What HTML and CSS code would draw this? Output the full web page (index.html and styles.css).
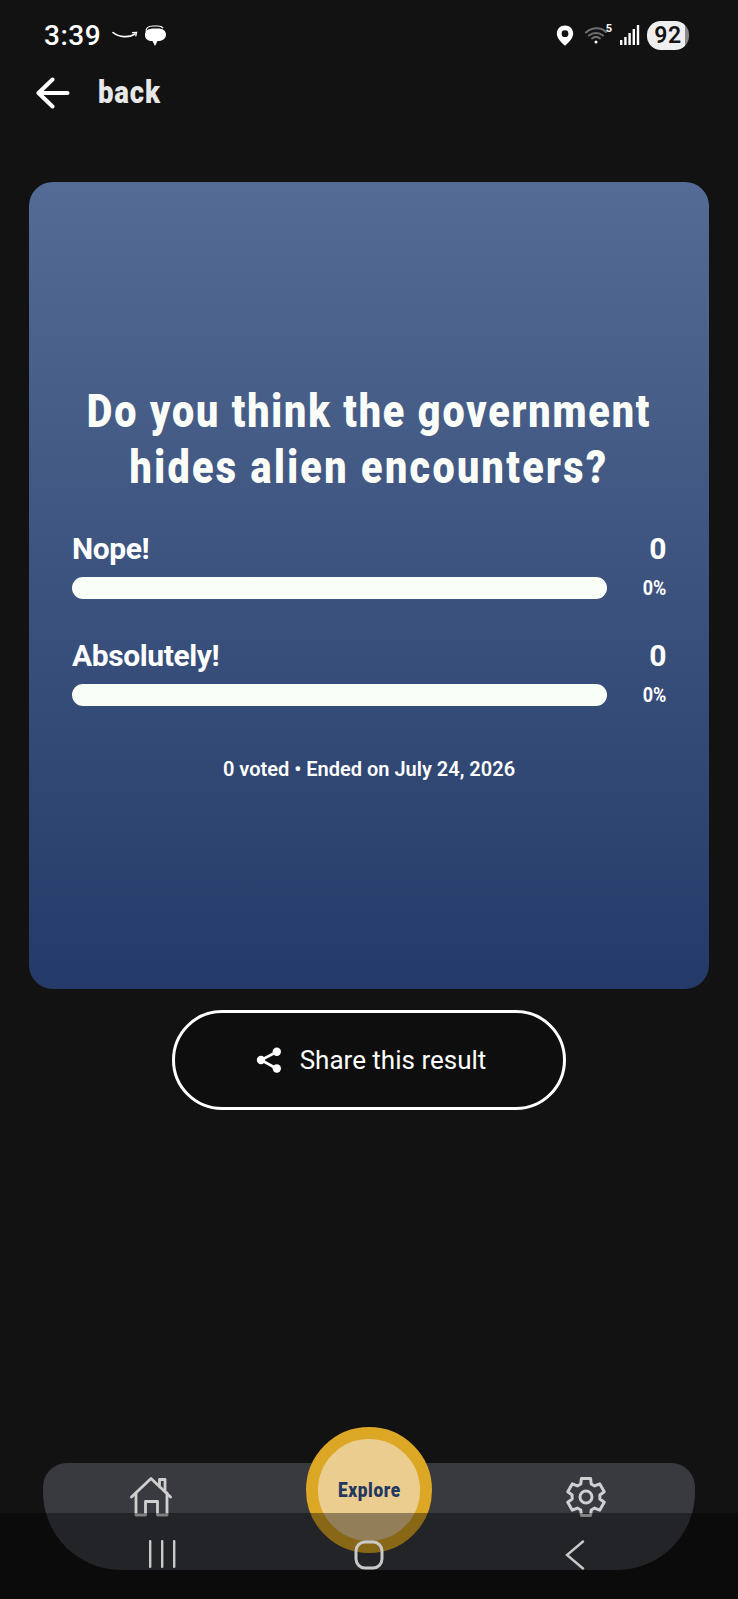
FILE: index.html
```html
<!DOCTYPE html>
<html lang="en">
<head>
  <meta charset="UTF-8" />
  <meta name="viewport" content="width=device-width, initial-scale=1" />
  <title>Poll result</title>
  <link rel="stylesheet" href="styles.css">
</head>
<body>
  <div class="status">
    <div class="status-left">
      <span class="time">3:39</span>
      <svg class="smile" width="26" height="10" viewBox="0 0 26 10" fill="none" stroke="#fff" stroke-linecap="round">
        <path d="M1 2.5C7 7.5 17 8 23 4" stroke-width="1.6"/>
        <path d="M20.5 2.6L24.6 2.4L23.8 6" stroke-width="1.2"/>
      </svg>
      <svg class="bubbles" width="22" height="21" viewBox="0 0 22 21">
        <path d="M2 6.5C2 3 5 1 9 1H14C16 1 18 1.800 19 3" fill="none" stroke="#fff" stroke-width="1.200"/>
        <path d="M1 10C1 5.500 4.500 3.500 10 3.500H14C18.500 3.500 22 5.500 22 9.500C22 13.500 18.500 16 14.500 16H13.500L11 21L8.500 16C4 16 1 14 1 10Z" fill="#fff"/>
      </svg>
    </div>
    <div class="status-right">
      <svg class="pin" width="18" height="21" viewBox="0 0 18 21">
        <path fill="#fff" fill-rule="evenodd" d="M9 0.500C4.300 0.500 0.800 4 0.800 8.600C0.800 13.500 5.500 17.800 9 20.800C12.500 17.800 17.200 13.500 17.200 8.600C17.200 4 13.700 0.500 9 0.500ZM9 5.300A3.400 3.400 0 1 1 9 12.100A3.400 3.400 0 1 1 9 5.300Z"/>
      </svg>
      <span class="wifi">
        <svg width="24" height="18" viewBox="0 0 24 18" fill="none" stroke="#6f6f6f" stroke-width="2" stroke-linecap="round">
          <path d="M1 6.500C7 1 16 1 21 6"/>
          <path d="M4 9.500C8 6 14 6 18 9.500"/>
          <path d="M7 12.500C9.500 10.500 12.500 10.500 15 12.500"/>
          <circle cx="11" cy="16" r="1.500" fill="#fff" stroke="none"/>
        </svg>
        <span class="wifi-num">5</span>
      </span>
      <svg class="signal" width="20" height="20" viewBox="0 0 20 20" fill="#fff">
        <rect x="0" y="15" width="2.400" height="5"/>
        <rect x="4.200" y="12" width="2.400" height="8"/>
        <rect x="8.400" y="8" width="2.400" height="12"/>
        <rect x="12.600" y="4" width="2.400" height="16"/>
        <rect x="16.800" y="0" width="2.400" height="20"/>
      </svg>
      <span class="battery">92</span>
    </div>
  </div>

  <div class="back">
    <svg width="34" height="32" viewBox="0 0 34 32" fill="none" stroke="#fff" stroke-width="4" stroke-linecap="round" stroke-linejoin="round">
      <path d="M31.500 16H3"/>
      <path d="M16.500 2.500L2.500 16L16.500 29.500"/>
    </svg>
    <span>back</span>
  </div>

  <div class="card">
    <h1>Do you think the government<br><span class="line-two">hides alien encounters?</span></h1>
    <div class="option">
      <div class="option-row">
        <span>Nope!</span>
        <span>0</span>
      </div>
      <div class="bar-row">
        <div class="bar"></div>
        <span class="pct">0%</span>
      </div>
    </div>
    <div class="option">
      <div class="option-row">
        <span>Absolutely!</span>
        <span>0</span>
      </div>
      <div class="bar-row">
        <div class="bar"></div>
        <span class="pct">0%</span>
      </div>
    </div>
    <p class="meta">0 voted • Ended on July 24, 2026</p>
  </div>

  <div class="share-wrap">
    <button class="share">
      <svg width="28" height="28" viewBox="0 0 28 28" fill="#fff" stroke="#fff">
        <path d="M21.500 6L6 14L21.500 22.500" fill="none" stroke-width="2.600"/>
        <circle cx="21.800" cy="5.800" r="4.200" stroke="none"/>
        <circle cx="6" cy="14" r="4.200" stroke="none"/>
        <circle cx="21.800" cy="22.500" r="4.200" stroke="none"/>
      </svg>
      Share this result
    </button>
  </div>

  <nav class="tabbar">
    <svg class="tab-icon" width="42" height="40" viewBox="0 0 42 40" fill="none" stroke="#cfcfcf" stroke-width="2.800" stroke-linejoin="round" stroke-linecap="round">
      <path d="M1.500 20L21 1.500L40.500 20"/>
      <path d="M29.500 9V2.500H35V14.500"/>
      <path d="M6 16V38H15.500V24.500H27.500V38H37V16"/>
    </svg>
    <svg class="tab-icon" width="40" height="40" viewBox="0 0 40 40" fill="none" stroke="#cfcfcf" stroke-width="3" stroke-linejoin="round">
      <circle cx="20" cy="20" r="6"/>
      <path d="M14.760 7.020L15.400 1.560H24.600L25.240 7.020L28.620 8.970L33.670 6.800L38.260 14.760L33.860 18.050V21.950L38.260 25.240L33.670 33.200L28.620 31.030L25.240 32.980L24.600 38.440H15.400L14.760 32.980L11.380 31.030L6.330 33.200L1.740 25.240L6.140 21.950V18.050L1.740 14.760L6.330 6.800L11.380 8.970Z"/>
    </svg>
  </nav>

  <div class="explore">
    <span>Explore</span>
  </div>

  <div class="sysnav">
    <svg class="sys-recent" width="30" height="28" viewBox="0 0 30 28" fill="#c9c9c9">
      <rect x="1" y="0" width="2.400" height="28" rx="1"/>
      <rect x="13" y="0" width="2.400" height="28" rx="1"/>
      <rect x="25" y="0" width="2.400" height="28" rx="1"/>
    </svg>
    <svg class="sys-home" width="30" height="30" viewBox="0 0 30 30" fill="none" stroke="#c9c9c9" stroke-width="3">
      <rect x="2" y="2" width="26" height="26" rx="9"/>
    </svg>
    <svg class="sys-back" width="20" height="30" viewBox="0 0 20 30" fill="none" stroke="#c9c9c9" stroke-width="2.400" stroke-linecap="round">
      <path d="M18 1.500L2 15L18 28.500"/>
    </svg>
  </div>
</body>
</html>
```

FILE: styles.css
```css
* { margin: 0; padding: 0; box-sizing: border-box; }
body {
  position: relative;
  width: 738px;
  height: 1599px;
  overflow: hidden;
  background: #121212;
  color: #fff;
  font-family: Roboto, sans-serif;
}

/* status bar */
.status {
  height: 70px;
  padding: 0 49px 0 44px;
  display: flex;
  align-items: center;
  justify-content: space-between;
}
.status-left, .status-right { display: flex; align-items: center; }
.time { font-size: 28px; font-weight: 500; letter-spacing: 0.5px; margin-right: 11px; }
.bubbles { margin-left: 6px; }
.pin { margin-right: 11px; }
.wifi { position: relative; display: block; width: 25px; height: 18px; margin-right: 10px; }
.wifi svg { display: block; }
.wifi-num { position: absolute; top: -4px; right: -2px; font-size: 11px; font-weight: 700; }
.signal { margin-right: 7px; }
.battery {
  width: 42px;
  height: 29px;
  border-radius: 14px;
  background: linear-gradient(to right, #efefef 90%, #8a8a8a 90%);
  color: #151515;
  font-size: 23px;
  font-weight: 600;
  letter-spacing: 0.5px;
  line-height: 29px;
  text-align: center;
}

/* back row */
.back {
  height: 46px;
  padding-left: 36px;
  display: flex;
  align-items: center;
  gap: 28px;
}
.back svg { flex: none; }
.back span {
  display: block;
  margin-top: -2px;
  font-size: 32px;
  font-weight: 900;
  color: #e8e8e8;
  letter-spacing: 1px;
  transform: scaleX(0.86);
  transform-origin: left center;
}

/* poll card */
.card {
  width: 680px;
  height: 807px;
  margin: 66px 0 0 29px;
  padding: 201px 43px 0;
  border-radius: 24px;
  background: linear-gradient(to bottom, #546b95, #243a68);
}
h1 {
  margin: 0 -60px;
  font-size: 47px;
  font-weight: 900;
  line-height: 56px;
  letter-spacing: 2.2px;
  text-align: center;
  white-space: nowrap;
  color: #fbfef8;
  transform: scaleX(0.84);
}
.line-two { letter-spacing: 2.8px; }
.option { margin-top: 36px; }
.option + .option { margin-top: 38px; }
.option-row {
  display: flex;
  justify-content: space-between;
  font-size: 30px;
  font-weight: 700;
  line-height: 36px;
  letter-spacing: -0.4px;
}
.bar-row { display: flex; align-items: center; justify-content: space-between; margin-top: 9px; }
.bar { width: 535px; height: 22px; border-radius: 11px; background: #f9fef6; }
.pct {
  display: block;
  font-size: 20px;
  font-weight: 700;
  transform: scaleX(0.9);
  transform-origin: right center;
}
.meta {
  margin-top: 50px;
  font-size: 20px;
  font-weight: 600;
  text-align: center;
}

/* share button */
.share-wrap { display: flex; justify-content: center; margin-top: 21px; }
.share {
  width: 394px;
  height: 100px;
  padding-left: 3px;
  border: 3px solid #fff;
  border-radius: 50px;
  background: #0e0e0e;
  color: #fff;
  font-family: Roboto, sans-serif;
  font-size: 26px;
  display: flex;
  align-items: center;
  justify-content: center;
  gap: 17px;
}

/* bottom tabs, drawn over the page */
.tabbar {
  position: absolute;
  left: 43px;
  top: 1463px;
  width: 652px;
  height: 107px;
  border-radius: 24px 24px 78px 78px;
  background: #393a40;
  display: flex;
  justify-content: space-between;
  padding: 14px 89px 0 87px;
}
.tab-icon { display: block; }
.explore {
  position: absolute;
  left: 306px;
  top: 1427px;
  width: 126px;
  height: 126px;
  border-radius: 50%;
  border: 12px solid #dca724;
  background: #eccd90;
  display: flex;
  align-items: center;
  justify-content: center;
}
.explore span {
  display: block;
  font-size: 21px;
  font-weight: 900;
  letter-spacing: 0.8px;
  color: #23385f;
  transform: scaleX(0.82);
}

/* android nav, translucent over the tabs */
.sysnav {
  position: absolute;
  left: 0;
  right: 0;
  bottom: 0;
  height: 86px;
  background: rgba(0, 0, 0, 0.38);
  padding: 27px 0 0 148px;
  display: flex;
  align-items: flex-start;
}
.sys-home { margin-left: 176px; }
.sys-back { margin-left: 181px; }
```
